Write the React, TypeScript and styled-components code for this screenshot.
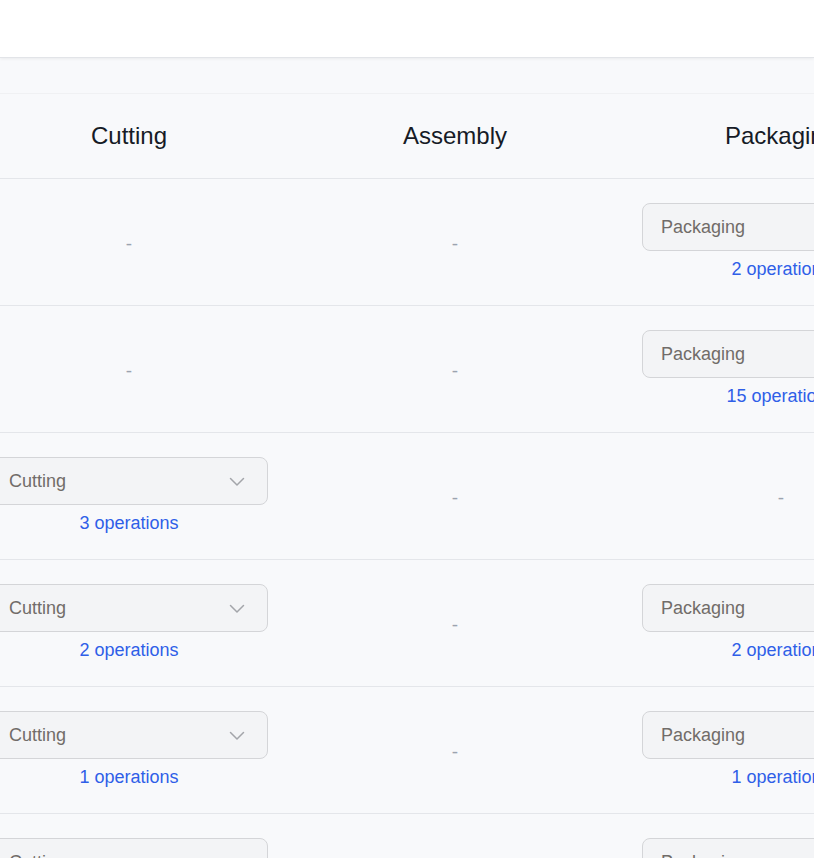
import React from "react";
import styled, { createGlobalStyle } from "styled-components";

const Global = createGlobalStyle`
  html, body { margin: 0; padding: 0; background: #f8f9fb; }
  body { font-family: "Liberation Sans", Arial, Helvetica, sans-serif; overflow: hidden; }
`;

const Page = styled.div`
  width: 814px;
  height: 858px;
  overflow: hidden;
  background: #f8f9fb;
`;

const TopBar = styled.header`
  height: 57px;
  background: #ffffff;
  border-bottom: 1px solid #e2e4e8;
  box-shadow: 0 1px 3px rgba(0, 0, 0, 0.06);
`;

const Body = styled.div`
  padding-top: 35px;
  overflow: hidden;
`;

const Table = styled.div`
  display: grid;
  grid-template-columns: repeat(3, 326px);
  margin-left: -34px;
  width: max-content;
  border-top: 1px solid #f0f1f3;
`;

const HeadCell = styled.div`
  height: 84px;
  display: flex;
  align-items: center;
  justify-content: center;
  font-size: 24px;
  color: #161b26;
  white-space: nowrap;
  border-bottom: 1px solid #e4e6ea;
`;

const Cell = styled.div`
  height: 126px;
  display: flex;
  flex-direction: column;
  align-items: center;
  justify-content: center;
  padding: 0 24px;
  border-bottom: 1px solid #e4e6ea;
`;

const Dash = styled.span`
  font-size: 19px;
  color: #9ca3af;
  line-height: 1;
  padding-top: 2px;
`;

const Select = styled.div`
  box-sizing: border-box;
  width: 100%;
  height: 48px;
  display: flex;
  align-items: center;
  justify-content: space-between;
  padding: 1px 22px 0 18px;
  background: #f3f4f6;
  border: 1px solid #d4d5d8;
  border-radius: 8px;
  font-size: 18px;
  color: #716c69;
`;

const Ops = styled.a`
  margin-top: 7px;
  font-size: 18px;
  line-height: 23px;
  color: #2f5fe8;
  text-decoration: none;
  white-space: nowrap;
`;

const Chevron = () => (
  <svg width="16" height="10" viewBox="0 0 16 10" fill="none">
    <path d="M1.5 1.5 L8 8 L14.5 1.5" stroke="#a3a5aa" strokeWidth="1.5" strokeLinecap="round" strokeLinejoin="round" />
  </svg>
);

type Stage = { label: string; ops: number } | null;

const columns = ["Cutting", "Assembly", "Packaging"];

const rows: Stage[][] = [
  [null, null, { label: "Packaging", ops: 2 }],
  [null, null, { label: "Packaging", ops: 15 }],
  [{ label: "Cutting", ops: 3 }, null, null],
  [{ label: "Cutting", ops: 2 }, null, { label: "Packaging", ops: 2 }],
  [{ label: "Cutting", ops: 1 }, null, { label: "Packaging", ops: 1 }],
  [{ label: "Cutting", ops: 4 }, null, { label: "Packaging", ops: 3 }],
];

const StageCell = ({ stage }: { stage: Stage }) => (
  <Cell>
    {stage ? (
      <>
        <Select>
          <span>{stage.label}</span>
          <Chevron />
        </Select>
        <Ops href="#">{stage.ops} operations</Ops>
      </>
    ) : (
      <Dash>-</Dash>
    )}
  </Cell>
);

export default function App() {
  return (
    <Page>
      <Global />
      <TopBar />
      <Body>
        <Table>
          {columns.map((c) => (
            <HeadCell key={c}>{c}</HeadCell>
          ))}
          {rows.map((r, i) =>
            r.map((s, j) => <StageCell key={`${i}-${j}`} stage={s} />)
          )}
        </Table>
      </Body>
    </Page>
  );
}
